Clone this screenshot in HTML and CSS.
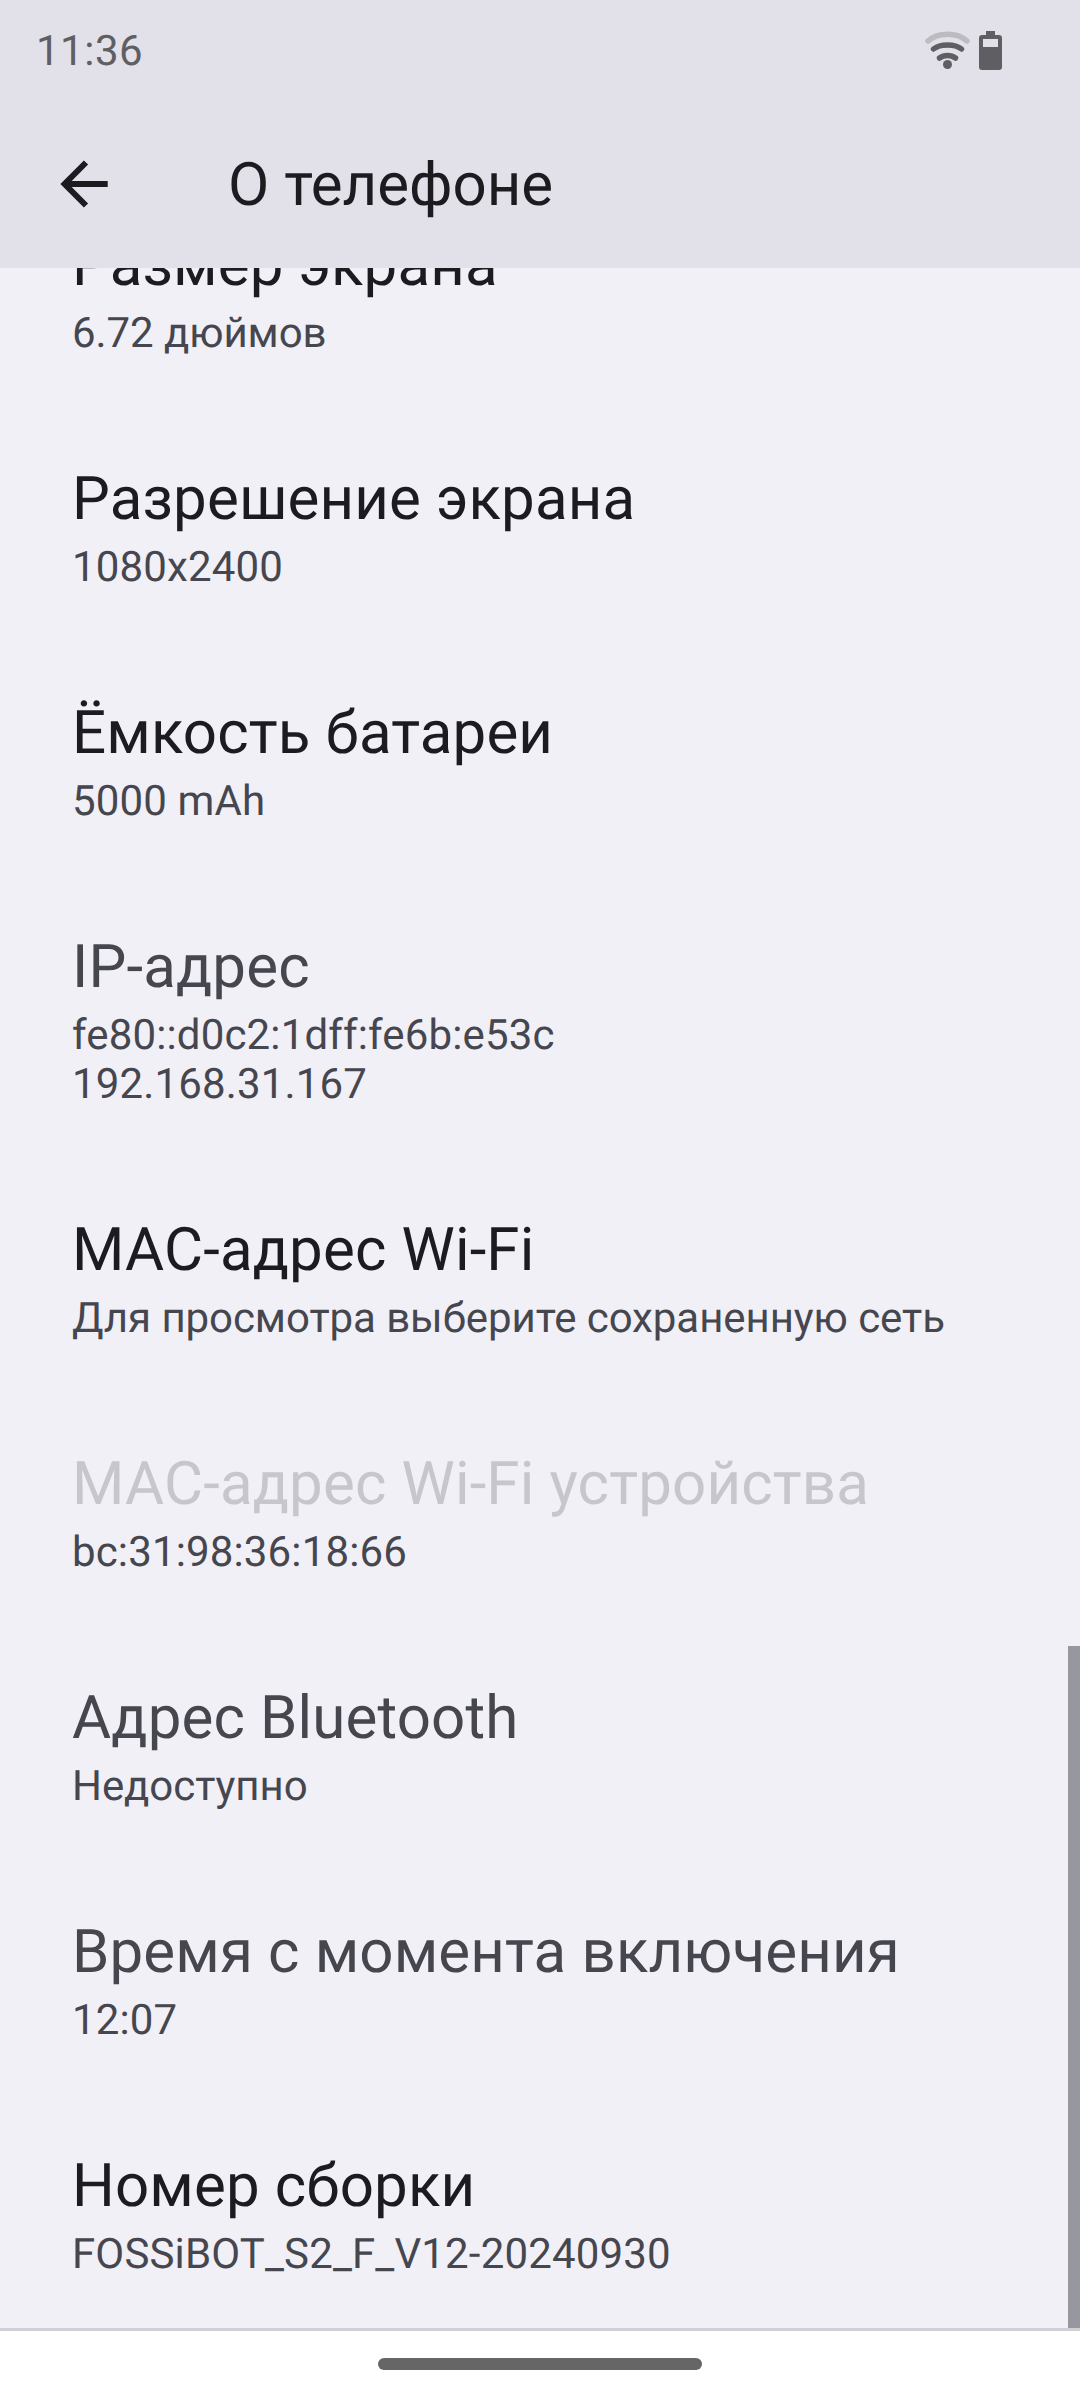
FILE: index.html
```html
<!DOCTYPE html>
<html lang="ru">
<head>
  <meta charset="utf-8">
  <title>О телефоне</title>
  <link rel="stylesheet" href="styles.css">
</head>
<body>
  <div class="phone">
    <header class="top">
      <div class="status">
        <span class="clock">11:36</span>
        <div class="status-icons">
          <svg class="wifi" width="45" height="39" viewBox="0 0 45 39">
            <path d="M3 10 C13 1 32 1 42 10" class="arc-dim"/>
            <path d="M8.500 18 C15 12.500 30 12.500 36.500 18" class="arc"/>
            <path d="M14.500 27 C19 23.500 26 23.500 30.500 27" class="arc"/>
            <circle cx="22.500" cy="33.500" r="4.500" fill="#5f5f63"/>
          </svg>
          <svg class="battery" width="23" height="39" viewBox="0 0 23 39">
            <path d="M7 0 H16 V4 H20 Q23 4 23 7 V36 Q23 39 20 39 H3 Q0 39 0 36 V7 Q0 4 3 4 H7 Z" fill="#5f5f63"/>
            <rect x="4" y="8" width="15" height="8" fill="#e2e1ea"/>
          </svg>
        </div>
      </div>
      <div class="toolbar">
        <svg class="back" width="48" height="48" viewBox="0 0 48 48">
          <path d="M5 24 H47.700 M26 2.500 L4.600 24 L26 45.500" class="back-line"/>
        </svg>
        <h1 class="title">О телефоне</h1>
      </div>
    </header>

    <main class="list">
      <div class="list-inner">
        <div class="row">
          <div class="row-title">Размер экрана</div>
          <div class="row-sub">6.72 дюймов</div>
        </div>
        <div class="row">
          <div class="row-title">Разрешение экрана</div>
          <div class="row-sub latin">1080x2400</div>
        </div>
        <div class="row">
          <div class="row-title">Ёмкость батареи</div>
          <div class="row-sub latin">5000 mAh</div>
        </div>
        <div class="row">
          <div class="row-title muted">IP-адрес</div>
          <div class="row-sub latin">fe80::d0c2:1dff:fe6b:e53c<br>192.168.31.167</div>
        </div>
        <div class="row">
          <div class="row-title">MAC-адрес Wi-Fi</div>
          <div class="row-sub">Для просмотра выберите сохраненную сеть</div>
        </div>
        <div class="row">
          <div class="row-title disabled">MAC-адрес Wi-Fi устройства</div>
          <div class="row-sub latin">bc:31:98:36:18:66</div>
        </div>
        <div class="row">
          <div class="row-title muted">Адрес Bluetooth</div>
          <div class="row-sub">Недоступно</div>
        </div>
        <div class="row">
          <div class="row-title muted">Время с момента включения</div>
          <div class="row-sub latin">12:07</div>
        </div>
        <div class="row">
          <div class="row-title">Номер сборки</div>
          <div class="row-sub latin">FOSSiBOT_S2_F_V12-20240930</div>
        </div>
      </div>
      <div class="scrollbar"></div>
    </main>

    <footer class="nav">
      <div class="home-pill"></div>
    </footer>
  </div>
</body>
</html>
```

FILE: styles.css
```css
* {
  box-sizing: border-box;
}

body {
  margin: 0;
  font-family: Roboto, "Noto Sans", sans-serif;
  text-rendering: geometricPrecision;
}

.phone {
  width: 1080px;
  height: 2400px;
  display: flex;
  flex-direction: column;
  background: #f1f0f7;
  overflow: hidden;
}

.top {
  height: 268px;
  flex: none;
  background: #e2e1ea;
}

.status {
  height: 100px;
  padding: 0 78px 0 36px;
  display: flex;
  align-items: center;
  justify-content: space-between;
}

.clock {
  margin-top: 2px;
  font-size: 42px;
  color: #5f5f63;
  letter-spacing: 0.5px;
}

.status-icons {
  display: flex;
  align-items: center;
  gap: 9px;
}

.arc, .arc-dim {
  fill: none;
  stroke-width: 5.5;
  stroke-linecap: round;
}

.arc {
  stroke: #5f5f63;
}

.arc-dim {
  stroke: #bcbcc0;
}

.toolbar {
  height: 168px;
  padding: 0 0 0 60px;
  display: flex;
  align-items: center;
}

.back {
  overflow: hidden;
}

.back-line {
  fill: none;
  stroke: #1c1b20;
  stroke-width: 6;
}

.title {
  margin: 0 0 0 120px;
  font-size: 60px;
  font-weight: 400;
  color: #1c1b20;
}

.list {
  position: relative;
  flex: 1;
  overflow: hidden;
}

.list-inner {
  margin-top: -97px;
}

.row {
  padding: 52px 72px 47px 72px;
}

.row-title {
  font-size: 60px;
  line-height: 84px;
  letter-spacing: 0.15px;
  color: #1c1b20;
}

.row-title.muted {
  color: #46464f;
}

.row-title.disabled {
  color: #c6c6cc;
}

.row-sub {
  margin-top: 2px;
  font-size: 42px;
  line-height: 49px;
  letter-spacing: -0.07px;
  color: #46464f;
}

.row-sub.latin {
  letter-spacing: 0.15px;
}

.scrollbar {
  position: absolute;
  right: 0;
  bottom: 0;
  width: 12px;
  height: 682px;
  background: #97979f;
}

.nav {
  height: 72px;
  flex: none;
  background: #fff;
  border-top: 3px solid #d0d0d6;
  display: flex;
  justify-content: center;
  padding-top: 27px;
}

.home-pill {
  width: 324px;
  height: 12px;
  border-radius: 6px;
  background: #666;
}
```
